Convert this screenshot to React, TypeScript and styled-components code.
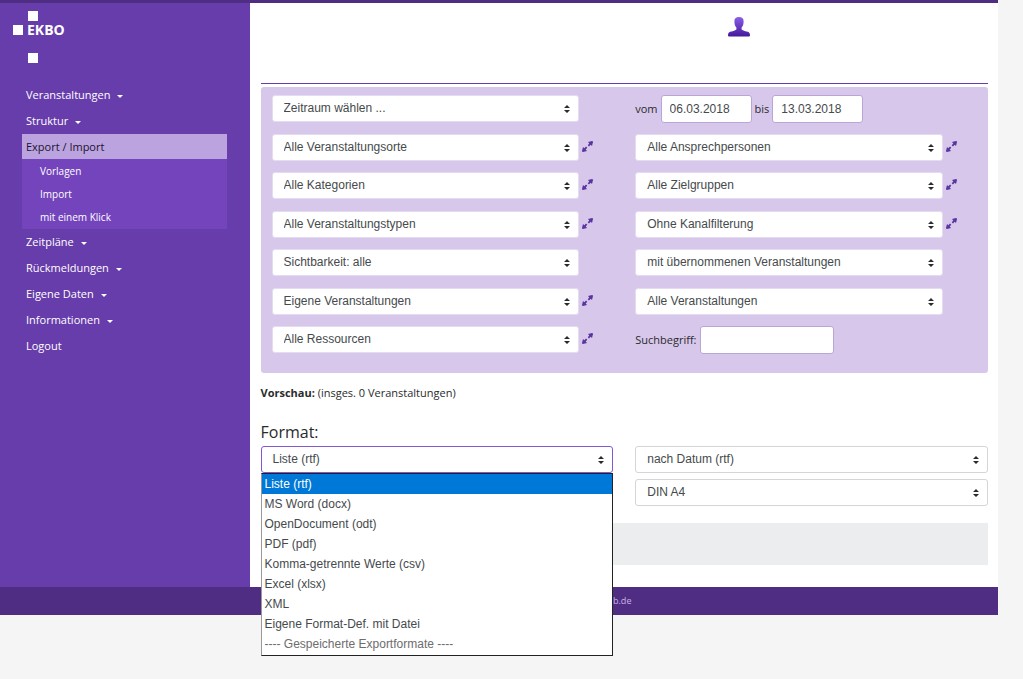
import React, { useState } from "react";
import styled, { createGlobalStyle } from "styled-components";

const uiFont = `"Open Sans", "Noto Sans", sans-serif`;
const fieldFont = `"Liberation Sans", Arial, sans-serif`;

const GlobalStyle = createGlobalStyle`
  *, *::before, *::after { box-sizing: border-box; }
  body {
    margin: 0;
    background: #f5f5f5;
    color: #292b2c;
    font-family: ${uiFont};
    font-size: 11px;
    line-height: 16px;
  }
`;

const Page = styled.div`
  min-height: 100vh;
  margin-right: 25px;
  border-top: 3px solid #4f2d83;
`;

const Columns = styled.div`
  display: grid;
  grid-template-columns: 1fr 3fr;
`;

const Sidebar = styled.aside`
  background: #673cab;
  padding: 0 23px 0 22px;
`;

const LogoLink = styled.a`
  display: block;
  height: 79px;
  margin-left: -9px;
  padding-top: 8px;
`;

const LogoSvg = styled.svg`
  display: block;
  text {
    font-family: ${uiFont};
    font-size: 14px;
    font-weight: 700;
    fill: #fff;
  }
`;

const Menu = styled.ul`
  list-style: none;
  margin: 0;
  padding: 0;
`;

const MenuLink = styled.a<{ $active?: boolean }>`
  display: flex;
  align-items: center;
  gap: 7px;
  height: ${(p) => (p.$active ? 25 : 26)}px;
  padding: 0 4px;
  color: ${(p) => (p.$active ? "#1d1230" : "#fff")};
  background: ${(p) => (p.$active ? "#bba3df" : "transparent")};
  text-decoration: none;
`;

const Caret = styled.span`
  margin-top: 3px;
  border: 3px solid transparent;
  border-top-color: currentColor;
  border-bottom: 0;
`;

const SubMenu = styled.ul`
  list-style: none;
  margin: 0;
  padding: 1px 0 0;
  background: #7444bd;
`;

const SubLink = styled.a`
  display: block;
  height: 23px;
  padding-left: 18px;
  font-size: 10px;
  line-height: 23px;
  color: #fff;
  text-decoration: none;
`;

const Main = styled.main`
  background: #fff;
  padding: 0 10px 22px 11px;
`;

const Header = styled.header`
  height: 81px;
  padding: 14px 0 0 calc(64% + 2px);
  border-bottom: 1px solid #673cab;
`;

const IconLink = styled.a`
  display: inline-block;
  line-height: 0;
`;

const FilterPanel = styled.form`
  display: grid;
  grid-template-columns: 1fr 1fr;
  margin-top: 3px;
  padding: 8px 0;
  background: #d7c8eb;
  border-radius: 3px;
`;

const FilterColumn = styled.div`
  display: grid;
  grid-template-rows: repeat(7, 1fr);
  align-items: start;
  height: 270px;
  padding-left: 11px;
`;

const FilterRow = styled.div`
  display: grid;
  grid-template-columns: 1fr 45px;
`;

const InlineRow = styled.div`
  display: flex;
  align-items: center;
  gap: 3px;
`;

const SelectBox = styled.div`
  position: relative;
`;

const StyledSelect = styled.select<{ $border: string }>`
  appearance: none;
  display: block;
  width: 100%;
  height: 27px;
  padding: 0 24px 1px 11px;
  border: 1px solid ${(p) => p.$border};
  border-radius: 3px;
  background: #fff;
  color: #464a4c;
  font-family: ${fieldFont};
  font-size: 12px;
  outline: none;
`;

const Arrows = styled.svg`
  position: absolute;
  right: 9px;
  top: 10px;
  pointer-events: none;
`;

const TextInput = styled.input<{ $width: number }>`
  width: ${(p) => p.$width}px;
  height: 28px;
  padding: 0 8px 1px;
  border: 1px solid #b9a6d6;
  border-radius: 3px;
  background: #fff;
  color: #464a4c;
  font-family: ${fieldFont};
  font-size: 12px;
  outline: none;
`;

const ExpandButton = styled.button`
  align-self: start;
  width: 18px;
  height: 20px;
  padding: 5px 0 0 3px;
  border: 0;
  background: none;
  line-height: 0;
  text-align: left;
`;

const Preview = styled.p`
  margin: 12px 0 0;
`;

const FormatTitle = styled.h2`
  margin: 19px 0 2px;
  font-size: 16px;
  font-weight: 400;
  line-height: 24px;
`;

const FormatGrid = styled.div`
  display: grid;
  grid-template-columns: 1fr 1fr;
  column-gap: 22px;
`;

const Stack = styled.div`
  display: grid;
  gap: 6px;
`;

const Options = styled.ul`
  position: absolute;
  z-index: 1;
  top: 27px;
  left: 0;
  right: 0;
  list-style: none;
  margin: 0;
  padding: 0 0 1px;
  border: 1px solid #222;
  border-left-color: #999;
  background: #fff;
`;

const Option = styled.li<{ $selected?: boolean; $muted?: boolean }>`
  height: 20px;
  padding-left: 3px;
  font-family: ${fieldFont};
  font-size: 12px;
  line-height: 20px;
  color: ${(p) => (p.$selected ? "#fff" : p.$muted ? "#6d6d6d" : "#464a4c")};
  background: ${(p) => (p.$selected ? "#0078d7" : "transparent")};
`;

const ActionBar = styled.div`
  height: 42px;
  margin-top: 17px;
  background: #ecedee;
`;

const Footer = styled.footer`
  height: 28px;
  padding-left: 613px;
  background: #4f2d83;
  color: #c9b5e8;
  font-size: 9px;
  line-height: 28px;
`;

const menu = [
  { label: "Veranstaltungen", caret: true },
  { label: "Struktur", caret: true },
  { label: "Export / Import", children: ["Vorlagen", "Import", "mit einem Klick"] },
  { label: "Zeitpläne", caret: true },
  { label: "Rückmeldungen", caret: true },
  { label: "Eigene Daten", caret: true },
  { label: "Informationen", caret: true },
  { label: "Logout" },
];

const leftFilters = [
  { label: "Zeitraum wählen ..." },
  { label: "Alle Veranstaltungsorte", expand: true },
  { label: "Alle Kategorien", expand: true },
  { label: "Alle Veranstaltungstypen", expand: true },
  { label: "Sichtbarkeit: alle" },
  { label: "Eigene Veranstaltungen", expand: true },
  { label: "Alle Ressourcen", expand: true },
];

const rightFilters = [
  { label: "Alle Ansprechpersonen", expand: true },
  { label: "Alle Zielgruppen", expand: true },
  { label: "Ohne Kanalfilterung", expand: true },
  { label: "mit übernommenen Veranstaltungen" },
  { label: "Alle Veranstaltungen" },
];

const formats = [
  "Liste (rtf)",
  "MS Word (docx)",
  "OpenDocument (odt)",
  "PDF (pdf)",
  "Komma-getrennte Werte (csv)",
  "Excel (xlsx)",
  "XML",
  "Eigene Format-Def. mit Datei",
  "---- Gespeicherte Exportformate ----",
];

function Select({ label, border = "#d5d5d8", children }: { label: string; border?: string; children?: React.ReactNode }) {
  return (
    <SelectBox>
      <StyledSelect aria-label={label} $border={border}>
        <option>{label}</option>
      </StyledSelect>
      <Arrows width="6" height="8" viewBox="0 0 6 8" aria-hidden="true">
        <path d="M3 0 L6 3 H0 Z M0 5 H6 L3 8 Z" fill="#292b2c" />
      </Arrows>
      {children}
    </SelectBox>
  );
}

function Filter({ label, expand }: { label: string; expand?: boolean }) {
  return (
    <FilterRow>
      <Select label={label} border="#e4dcf0" />
      {expand && (
        <ExpandButton type="button" aria-label={`${label} erweitern`}>
          <svg width="11" height="11" viewBox="0 0 11 11" fill="#5a35a0">
            <path d="M6 1 L10 0 Q11 0 11 1 L10 5 L8.7 3.8 L7 5.5 L5.7 4.2 L7.3 2.5 Z" />
            <path d="M5 10 L1 11 Q0 11 0 10 L1 6 L2.3 7.2 L4 5.5 L5.3 6.8 L3.7 8.5 Z" />
          </svg>
        </ExpandButton>
      )}
    </FilterRow>
  );
}

export default function App() {
  const [from, setFrom] = useState("06.03.2018");
  const [to, setTo] = useState("13.03.2018");
  const [term, setTerm] = useState("");

  return (
    <>
      <GlobalStyle />
      <Page>
        <Columns>
          <Sidebar>
            <LogoLink href="#" aria-label="EKBO">
              <LogoSvg width="60" height="52" viewBox="0 0 60 52">
                <path d="M15 0h10v10h-10z M0 14h10v10h-10z M15 42h10v10h-10z" fill="#fff" />
                <text x="14" y="24">EKBO</text>
              </LogoSvg>
            </LogoLink>
            <nav>
              <Menu>
                {menu.map((m) => (
                  <li key={m.label}>
                    <MenuLink href="#" $active={!!m.children}>
                      {m.label}
                      {m.caret && <Caret />}
                    </MenuLink>
                    {m.children && (
                      <SubMenu>
                        {m.children.map((c) => (
                          <li key={c}>
                            <SubLink href="#">{c}</SubLink>
                          </li>
                        ))}
                      </SubMenu>
                    )}
                  </li>
                ))}
              </Menu>
            </nav>
          </Sidebar>
          <Main>
            <Header>
              <IconLink href="#" aria-label="Benutzer">
                <svg width="22" height="20" viewBox="0 0 22 20">
                  <defs>
                    <linearGradient id="user" x1="0" y1="0" x2="0" y2="1">
                      <stop offset="0" stopColor="#8a5fe6" />
                      <stop offset="1" stopColor="#45189c" />
                    </linearGradient>
                  </defs>
                  <path
                    fill="url(#user)"
                    d="M11 0C14.2 0 15.8 1.6 15.6 4.4C15.6 7.4 14.8 9.2 13.6 10.6V12.4C15 13.8 18 14 20 14.8C21.6 15.5 22 17 22 18.6Q22 19.5 21 19.5H1Q0 19.5 0 18.6C0 17 .4 15.5 2 14.8C4 14 7 13.8 8.4 12.4V10.6C7.2 9.2 6.4 7.4 6.4 4.4C6.2 1.6 7.8 0 11 0Z"
                  />
                </svg>
              </IconLink>
            </Header>
            <FilterPanel>
              <FilterColumn>
                {leftFilters.map((f) => (
                  <Filter key={f.label} {...f} />
                ))}
              </FilterColumn>
              <FilterColumn>
                <InlineRow>
                  <label htmlFor="from">vom</label>
                  <TextInput id="from" $width={91} value={from} onChange={(e) => setFrom(e.target.value)} />
                  <label htmlFor="to">bis</label>
                  <TextInput id="to" $width={91} value={to} onChange={(e) => setTo(e.target.value)} />
                </InlineRow>
                {rightFilters.map((f) => (
                  <Filter key={f.label} {...f} />
                ))}
                <InlineRow>
                  <label htmlFor="term">Suchbegriff:</label>
                  <TextInput id="term" $width={134} value={term} onChange={(e) => setTerm(e.target.value)} />
                </InlineRow>
              </FilterColumn>
            </FilterPanel>
            <Preview>
              <b>Vorschau:</b> (insges. 0 Veranstaltungen)
            </Preview>
            <FormatTitle>Format:</FormatTitle>
            <FormatGrid>
              <Select label="Liste (rtf)" border="#8058cf">
                <Options role="listbox" aria-label="Format">
                  {formats.map((f, i) => (
                    <Option key={f} role="option" aria-selected={i === 0} $selected={i === 0} $muted={i === 8}>
                      {f}
                    </Option>
                  ))}
                </Options>
              </Select>
              <Stack>
                <Select label="nach Datum (rtf)" />
                <Select label="DIN A4" />
              </Stack>
            </FormatGrid>
            <ActionBar />
          </Main>
        </Columns>
        <Footer>b.de</Footer>
      </Page>
    </>
  );
}
